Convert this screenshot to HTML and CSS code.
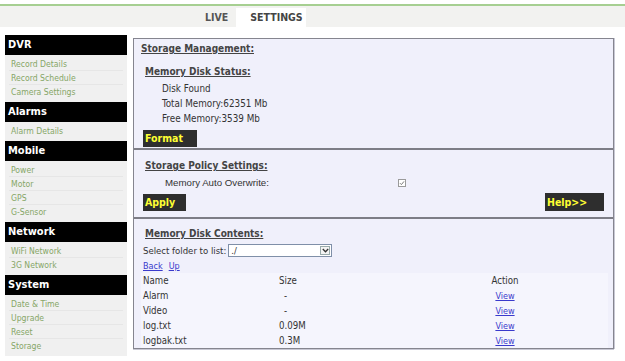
FILE: index.html
```html
<!DOCTYPE html>
<html>
<head>
<meta charset="utf-8">
<title>Settings - Storage</title>
<link rel="stylesheet" href="styles.css">
</head>
<body>
<div class="topbar">
  <div class="tabs">
    <span class="tab">LIVE</span>
    <span class="tab active">SETTINGS</span>
  </div>
</div>
<div class="layout">
  <nav class="sidebar">
    <div class="group-title">DVR</div>
    <ul class="group-list">
      <li>Record Details</li>
      <li>Record Schedule</li>
      <li>Camera Settings</li>
    </ul>
    <div class="group-title">Alarms</div>
    <ul class="group-list">
      <li>Alarm Details</li>
    </ul>
    <div class="group-title">Mobile</div>
    <ul class="group-list">
      <li>Power</li>
      <li>Motor</li>
      <li>GPS</li>
      <li>G-Sensor</li>
    </ul>
    <div class="group-title">Network</div>
    <ul class="group-list">
      <li>WiFi Network</li>
      <li>3G Network</li>
    </ul>
    <div class="group-title">System</div>
    <ul class="group-list">
      <li>Date &amp; Time</li>
      <li>Upgrade</li>
      <li>Reset</li>
      <li>Storage</li>
    </ul>
  </nav>
  <main class="panel">
    <section class="sec sec-status">
      <div class="title">Storage Management:</div>
      <div class="subtitle">Memory Disk Status:</div>
      <div class="info">
        <div>Disk Found</div>
        <div>Total Memory:62351 Mb</div>
        <div>Free Memory:3539 Mb</div>
      </div>
      <div class="btn btn-format">Format</div>
    </section>
    <section class="sec sec-policy">
      <div class="subtitle">Storage Policy Settings:</div>
      <div class="policy-row">
        <span class="policy-label">Memory Auto Overwrite:</span>
        <svg class="check" width="8" height="8" viewBox="0 0 8 8">
          <rect x="0.5" y="0.5" width="7" height="7" fill="#fff" stroke="#9a9a9a"/>
          <path d="M2 4.2 L3.4 5.6 L6 2.4" fill="none" stroke="#7a7a7a" stroke-width="1"/>
        </svg>
      </div>
      <div class="btn-row">
        <div class="btn btn-apply">Apply</div>
        <div class="btn btn-help">Help&gt;&gt;</div>
      </div>
    </section>
    <section class="sec sec-contents">
      <div class="subtitle">Memory Disk Contents:</div>
      <div class="select-row">
        <span>Select folder to list:</span>
        <div class="select">
          <span class="select-val">./</span>
          <span class="select-arrow">
            <svg width="7" height="5" viewBox="0 0 7 5"><path d="M0.8 1 L3.5 3.8 L6.2 1" fill="none" stroke="#333" stroke-width="1.3"/></svg>
          </span>
        </div>
      </div>
      <div class="nav-links"><a href="#">Back</a><a href="#">Up</a></div>
      <div class="files">
        <div class="row">
          <span>Name</span><span>Size</span><span class="act">Action</span>
        </div>
        <div class="row">
          <span>Alarm</span><span class="dash">-</span><span class="act"><a href="#">View</a></span>
        </div>
        <div class="row">
          <span>Video</span><span class="dash">-</span><span class="act"><a href="#">View</a></span>
        </div>
        <div class="row">
          <span>log.txt</span><span>0.09M</span><span class="act"><a href="#">View</a></span>
        </div>
        <div class="row">
          <span>logbak.txt</span><span>0.3M</span><span class="act"><a href="#">View</a></span>
        </div>
      </div>
    </section>
  </main>
</div>
</body>
</html>
```
FILE: styles.css
```css
* { box-sizing: border-box; }
html, body { margin: 0; padding: 0; background: #fff; }
body {
  font-family: "DejaVu Sans Condensed", "DejaVu Sans", sans-serif;
  font-size: 9.5px;
  color: #333;
  width: 625px;
  height: 361px;
  overflow: hidden;
}
.topbar {
  margin-top: 4px;
  border-top: 2px solid #a6cf91;
  background: #f2f2f0;
  height: 23px;
}
.tabs {
  display: flex;
  padding-left: 195px;
  padding-top: 2px;
  height: 100%;
}
.tab {
  font-weight: bold;
  font-size: 10.5px;
  color: #555;
  padding: 0 8px 0 10px;
  line-height: 19px;
}
.tab.active {
  background: #fff;
  width: 70px;
  padding: 0 0 0 14px;
  color: #444;
}
.layout {
  display: flex;
  align-items: flex-start;
  padding: 8px 0 0 5px;
}
.sidebar {
  width: 122px;
  flex: none;
  background: #f0f0f0;
}
.group-title {
  background: #000;
  color: #fff;
  font-weight: bold;
  font-size: 11px;
  height: 20px;
  line-height: 20px;
  padding-left: 3px;
}
.group-list {
  list-style: none;
  margin: 0;
  padding: 2px 4px 3px 4px;
}
.group-list li {
  height: 14px;
  line-height: 14px;
  padding-left: 2px;
  font-size: 8.6px;
  color: #86a667;
  border-bottom: 1px solid #e6e6e6;
}
.group-list li:last-child { border-bottom: none; }
.panel {
  margin: 3px 0 0 6px;
  width: 481px;
  height: 311px;
  background: #f0f0fb;
  border: 1px solid #85858f;
  box-shadow: 1px 0 0 #c8c8d4, 0 1px 0 #c8c8d4;
  display: flex;
  flex-direction: column;
}
.sec { padding: 0 0 0 7px; }
.sec-status { height: 112px; padding-top: 2px; border-bottom: 2px solid #7d7d86; }
.sec-policy { height: 69px; padding-top: 8px; border-bottom: 2px solid #7d7d86; }
.sec-contents { flex: 1; padding-top: 7px; padding-right: 5px; }
.title, .subtitle {
  font-weight: bold;
  text-decoration: underline;
  color: #444;
  font-size: 10px;
  line-height: 15px;
}
.sec-status .subtitle { margin-top: 8px; padding-left: 4px; }
.sec-policy .subtitle, .sec-contents .subtitle { padding-left: 4px; }
.info { padding-left: 21px; margin-top: 2px; font-size: 9.8px; }
.info div { line-height: 15px; }
.btn {
  background: #2e2e2e;
  color: #ffff33;
  font-weight: bold;
  font-size: 10.5px;
  height: 17px;
  line-height: 17px;
  padding-left: 2px;
}
.btn-format { width: 54px; margin-top: 4px; margin-left: 2px; }
.policy-row {
  display: flex;
  align-items: center;
  margin-top: 2px;
  height: 15px;
  padding-left: 24px;
}
.policy-label {
  font-family: "Liberation Sans", Arial, sans-serif;
  font-size: 9.7px;
  width: 233px;
}
.check { display: block; }
.btn-row {
  display: flex;
  justify-content: space-between;
  margin-top: 4px;
  padding-left: 2px;
  padding-right: 9px;
}
.btn-apply { width: 43px; }
.btn-help { width: 59px; height: 18px; line-height: 18px; margin-top: -1px; }
.select-row {
  display: flex;
  align-items: center;
  height: 15px;
  margin-top: 2px;
  padding-left: 2px;
  gap: 2px;
}
.select {
  width: 104px;
  height: 13px;
  background: #fff;
  border: 1px solid #7f8fa8;
  display: flex;
  justify-content: space-between;
  align-items: stretch;
}
.select-val { padding-left: 2px; line-height: 11px; }
.select-arrow {
  width: 10px;
  border: 1px solid #9aa;
  margin: 1px;
  display: flex;
  align-items: center;
  justify-content: center;
  background: #f4f4f4;
}
.nav-links {
  display: flex;
  gap: 6px;
  padding-left: 2px;
  height: 16px;
  line-height: 16px;
}
a { color: #3a3acc; text-decoration: underline; font-size: 9px; }
.files {
  background: #f5f5fd;
  margin-top: -1px;
}
.row {
  display: grid;
  grid-template-columns: 136px 163px 126px;
  height: 15px;
  line-height: 15px;
  padding-left: 2px;
  font-size: 9.6px;
}
.row .dash { padding-left: 5px; }
.row .act { text-align: center; }
```
